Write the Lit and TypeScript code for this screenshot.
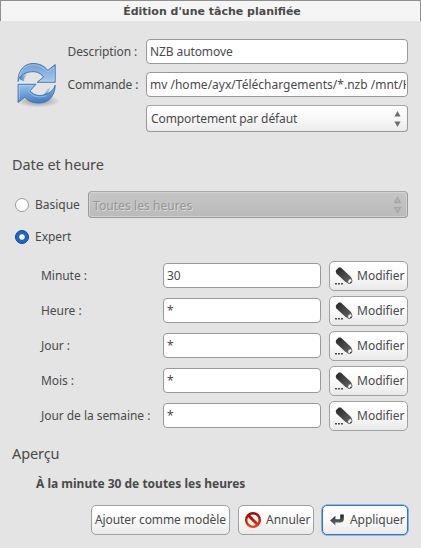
import { LitElement, html, css, svg } from "lit";
import { customElement, property } from "lit/decorators.js";

const pencil = html`<svg class="icon" width="20" height="20" viewBox="0 0 20 20">
  <defs><linearGradient id="pg" x1="0" y1="0" x2="1" y2="1"><stop offset="0" stop-color="#242424" /><stop offset="1" stop-color="#6a6a6a" /></linearGradient></defs>
  <path d="M3.2 4 5.8 1.6 7.8 1.6 18 11 19 14 18 17.2 15 17.4 12 15.6 3.4 7.4 2.8 5.6Z" fill="url(#pg)" />
  <path d="M18.4 12.7C16.2 12.5 14.7 14.1 14.5 16.4L16.2 17.5 18.4 16.9 19 15Z" fill="#f6f6f6" stroke="#555" stroke-width=".8" />
  <path d="M17.2 15.8h1.3v1.3h-1.6z" fill="#444" />
  <path d="M2 17h2v1.5H2zM5 17h2v1.5H5zM8 17h2v1.5H8z" fill="#4b4b4b" />
</svg>`;

const forbid = html`<svg class="icon" width="18" height="18" viewBox="0 0 18 18">
  <defs><linearGradient id="fg" x1="0" y1="0" x2="0" y2="1"><stop offset="0" stop-color="#9c0500" /><stop offset=".5" stop-color="#c91505" /><stop offset="1" stop-color="#f84a16" /></linearGradient></defs>
  <path fill-rule="evenodd" fill="url(#fg)" d="M9 1a8 8 0 1 1 0 16a8 8 0 1 1 0-16ZM9 3.5A5.5 5.5 0 0 0 6.3 4.2L13.8 11.7A5.5 5.5 0 0 0 9 3.5ZM4.2 6.3A5.5 5.5 0 0 0 11.7 13.8Z" />
</svg>`;

const enter = html`<svg class="icon" width="18" height="18" viewBox="0 0 18 18">
  <defs><linearGradient id="eg" x1="0" y1="0" x2="0" y2="1"><stop offset="0" stop-color="#222" /><stop offset="1" stop-color="#777" /></linearGradient></defs>
  <path fill="url(#eg)" d="M12.2 3.5h3.6v4.5c0 2.4-1.4 3.6-3.6 3.6H7.4V14.5L2 9.5 7.4 4.8V8.2h3.4c1 0 1.4-.4 1.4-1.3Z" />
</svg>`;

const sync = html`<svg width="48" height="48" viewBox="0 0 48 48">
  <defs>
    <linearGradient id="sa" x1="0" y1="0" x2="0" y2="1"><stop offset="0" stop-color="#6f9fd6" /><stop offset="1" stop-color="#a6c8ec" /></linearGradient>
    <linearGradient id="sb" x1="0" y1="0" x2=".2" y2="1"><stop offset="0" stop-color="#9fc4ec" /><stop offset="1" stop-color="#4480c4" /></linearGradient>
    <linearGradient id="sc" x1="0" y1="0" x2="1" y2="0"><stop offset="0" stop-color="#4279bc" /><stop offset="1" stop-color="#dce9f7" /></linearGradient>
    <radialGradient id="sh"><stop offset="0" stop-color="#000" stop-opacity=".38" /><stop offset="1" stop-color="#000" stop-opacity="0" /></radialGradient>
  </defs>
  <ellipse cx="26" cy="41" rx="22" ry="6.5" fill="url(#sh)" />
  <path d="M8 19.5C8 13 12 10 16 10L16 14C13 16 12 19 12 21.5Z" fill="url(#sc)" />
  <path d="M39 26C38 32 36 35 31 36L36 29Z" fill="url(#sc)" />
  <path d="M6.1 21.5C5.8 9.5 13 3.5 21 3.5C27.5 3.5 32.5 6 35.8 10.4L43.2 4.5V22.3H25.2L31.5 17C28 12.2 23 11 17.5 12C11 13 7 16.5 6.1 21.5Z" fill="url(#sa)" stroke="#3b6fae" stroke-width=".9" stroke-linejoin="round" />
  <path d="M7.4 16C9 8.5 14.5 4.8 21 4.8C27 4.8 32 7.8 35.6 12L42 7.2V21H28.6" fill="none" stroke="#b9d3ef" stroke-width=".6" />
  <path d="M43.2 25.2C43 36 36.5 43 27 43C20.5 43 16 41 12.8 37.2L6.1 42.4V24.3H24L18 30.8C22 35.8 28 36.5 34 34.3C38.5 32.8 42 29.5 43.2 25.2Z" fill="url(#sb)" stroke="#3b6fae" stroke-width=".9" stroke-linejoin="round" />
  <path d="M7.3 40V25.5H21.2L16.4 31C21 37.5 28.5 38 34.5 35.6" fill="none" stroke="#b9d3ef" stroke-width=".6" />
</svg>`;

@customElement("combo-box")
class ComboBox extends LitElement {
  @property() label = "";
  @property({ type: Boolean, reflect: true }) disabled = false;
  static styles = css`
    :host { display: flex; box-sizing: border-box; height: 27px; flex: 1; align-items: center; justify-content: space-between;
      padding: 0 5px 0 4px; border: 1px solid #999; border-top-color: #a8a8a8; border-radius: 4px;
      background: linear-gradient(#fff, #f8f8f8 50%, #ebebeb); color: #4a4a4a; letter-spacing: -.1px; }
    :host([disabled]) { background: linear-gradient(#c6c6c6, #bababa); color: #969696; text-shadow: 1px 1px 0 #d8d8d8;
      box-shadow: inset 0 0 0 1px #d1d1d1; letter-spacing: .07px; }
    :host([disabled]) span { padding-top: 2px; }
    svg { display: block; }
    :host([disabled]) svg { margin-top: 1px; }
    .arrow { fill: #6e6e6e; }
    :host([disabled]) .arrow { fill: #b3b3b3; stroke: #929292; stroke-width: .6; }
  `;
  render() {
    return html`<span>${this.label}</span>
      <svg width="9" height="18" viewBox="0 0 9 18">${svg`<path class="arrow" d="M1.4 6.6 4.5 1 7.6 6.6ZM1.4 11.4 4.5 17 7.6 11.4Z" />`}</svg>`;
  }
}

@customElement("app-root")
class AppRoot extends LitElement {
  static styles = css`
    :host { display: block; width: 421px; height: 548px; overflow: hidden; background: #e4e4e4; color: #4a4a4a;
      font: 12px/16px "Noto Sans", sans-serif; white-space: nowrap; }
    * { box-sizing: border-box; }
    svg { display: block; flex: none; }
    .title { height: 21px; background: #f5f5f5; border: 1px solid #8f8f8f; border-bottom: 0; text-align: center;
      font: bold 11px/21px "DejaVu Sans", sans-serif; padding-left: 3px; }
    .content { padding: 18px 13px 0 12px; }
    .top { display: grid; grid-template-columns: 48px 71px 262px; column-gap: 7.5px; }
    .sync { padding-top: 21px; }
    .labels, .fields { display: flex; flex-direction: column; gap: 8px; }
    .labels { letter-spacing: -.1px; }
    .labels span { line-height: 25px; }
    .input { height: 25px; line-height: 23px; padding: 0 0 0 3px; background: #fff; border: 1px solid #999; border-radius: 4px;
      overflow: hidden; letter-spacing: -.1px; }
    .clip { display: block; width: 255.5px; overflow: hidden; letter-spacing: .01px; }
    .fields combo-box { flex: none; }
    h2 { margin: 0; font-size: 14.5px; font-weight: 400; line-height: 20px; letter-spacing: -.1px; }
    .date { margin-top: 22px; }
    .mode { display: flex; align-items: center; height: 27px; padding-left: 3px; letter-spacing: -.02px; }
    .basic { margin-top: 17px; }
    .expert { margin-top: 5px; }
    .radio { width: 14px; height: 14px; border-radius: 50%; background: #fff; border: 1px solid #999; margin-right: 6px; }
    .radio-on { margin-right: 6px; overflow: visible; }
    .mode-label { width: 53px; }
    .rows { display: grid; gap: 5px; margin-top: 11px; padding-left: 29px; }
    .row { display: grid; grid-template-columns: 122px 158px 87px; align-items: center; letter-spacing: -.05px; }
    .row .input { position: relative; top: -.5px; line-height: 24px; letter-spacing: 0; }
    .btn { height: 30px; display: flex; align-items: center; padding: 0 3px; border: 1px solid #a0a0a0; border-radius: 5px;
      background: linear-gradient(#fff, #fafafa 50%, #e9e9e9); letter-spacing: 0; }
    .btn .icon { margin-right: 4px; }
    .row .btn { width: 79px; margin-left: 8px; }
    .preview { margin-top: 12px; }
    .summary { margin: 13px 0 0 24px; line-height: 16px; font-weight: 700; }
    .actions { display: flex; justify-content: flex-end; gap: 8px; margin-top: 13px; }
    .template { width: 139px; letter-spacing: -.08px; }
    .cancel { width: 76px; padding-left: 5px; letter-spacing: -.03px; }
    .apply { width: 86px; padding-left: 5px; border-color: #3375c8; box-shadow: 0 0 0 .6px #4b88d3; letter-spacing: -.05px; }
  `;

  render() {
    const rows = [["Minute :", "30"], ["Heure :", "*"], ["Jour :", "*"], ["Mois :", "*"], ["Jour de la semaine :", "*"]];
    return html`
      <div class="title">Édition d'une tâche planifiée</div>
      <div class="content">
        <div class="top">
          <div class="sync">${sync}</div>
          <div class="labels"><span>Description :</span><span>Commande :</span></div>
          <div class="fields">
            <div class="input">NZB automove</div>
            <div class="input"><span class="clip">mv /home/ayx/Téléchargements/*.nzb /mnt/H</span></div>
            <combo-box label="Comportement par défaut"></combo-box>
          </div>
        </div>
        <h2 class="date">Date et heure</h2>
        <div class="mode basic"><span class="radio"></span><span class="mode-label">Basique</span><combo-box disabled label="Toutes les heures"></combo-box></div>
        <div class="mode expert">
          <svg class="radio-on" width="14" height="14" viewBox="0 0 14 14"><circle cx="7" cy="7" r="6.5" fill="#1769d0" stroke="#0d4691" /><circle cx="7" cy="7" r="3.4" fill="#fff" stroke="#0d4691" /></svg>
          <span>Expert</span>
        </div>
        <div class="rows">
          ${rows.map(([label, value]) => html`<div class="row"><span class="label">${label}</span><div class="input">${value}</div><div class="btn">${pencil}<span>Modifier</span></div></div>`)}
        </div>
        <h2 class="preview">Aperçu</h2>
        <div class="summary">À la minute 30 de toutes les heures</div>
        <div class="actions">
          <div class="btn template">Ajouter comme modèle</div>
          <div class="btn cancel">${forbid}<span>Annuler</span></div>
          <div class="btn apply">${enter}<span>Appliquer</span></div>
        </div>
      </div>`;
  }
}
